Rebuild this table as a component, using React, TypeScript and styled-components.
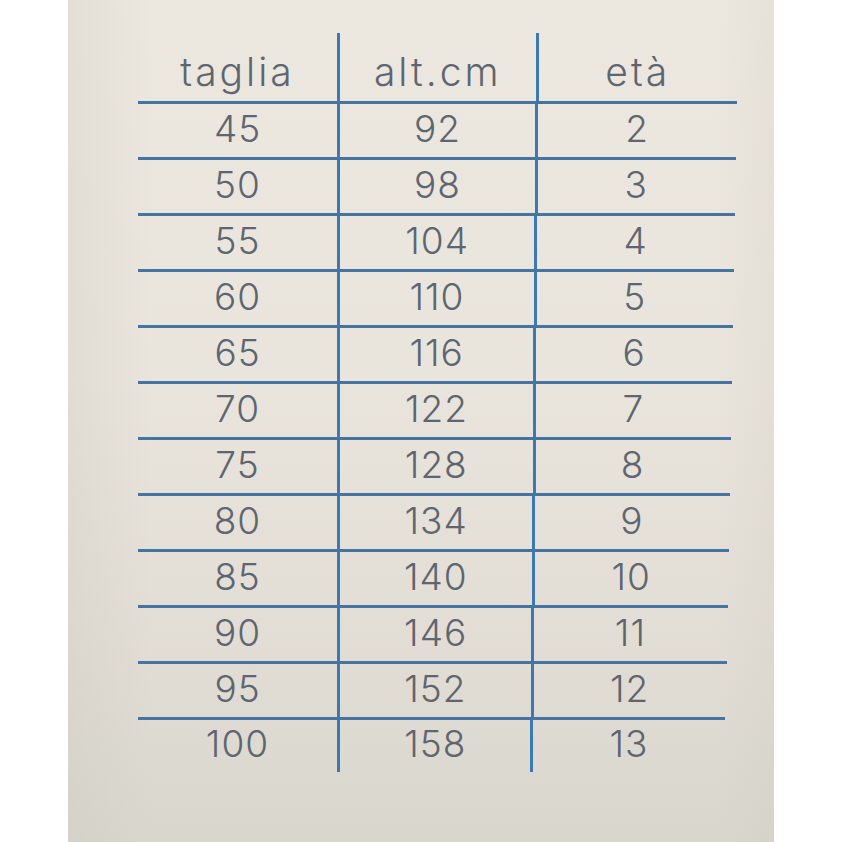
import React from "react";
import styled, { createGlobalStyle } from "styled-components";

const Global = createGlobalStyle`
  html, body {
    margin: 0;
    padding: 0;
    background: #ffffff;
  }
  #root {
    width: 842px;
    height: 842px;
  }
`;

const Page = styled.div`
  width: 842px;
  height: 842px;
  display: flex;
  background: #ffffff;
`;

const Card = styled.main`
  margin-left: 68px;
  width: 706px;
  height: 842px;
  box-sizing: border-box;
  padding: 33px 0 0 70px;
  background:
    linear-gradient(to right, rgba(200, 196, 186, 0.25) 0%, rgba(200, 196, 186, 0) 12%, rgba(200, 196, 186, 0) 92%, rgba(200, 196, 186, 0.18) 100%),
    linear-gradient(to bottom, #ede8df 0%, #e9e5dc 45%, #e2ded5 75%, #d9d6cd 100%);
`;

const Table = styled.div`
  display: flex;
  flex-direction: column;
  font-family: "Inter", "Liberation Sans", sans-serif;
  color: #5d6670;
`;

const Row = styled.div<{ $step: number; $kind: "header" | "body" | "last" }>`
  display: grid;
  grid-template-columns: 199px ${(p) => 198.5 - p.$step * 0.42}px 1fr;
  width: ${(p) => 599 - p.$step * 1.05}px;
  height: ${(p) => (p.$kind === "header" ? 71 : p.$kind === "last" ? 52 : 56)}px;
  box-sizing: border-box;
  border-bottom: ${(p) => (p.$kind === "last" ? "none" : "3px solid #4574a3")};
`;

const Cell = styled.div<{ $divider?: boolean; $header?: boolean }>`
  display: flex;
  justify-content: center;
  align-items: ${(p) => (p.$header ? "flex-end" : "center")};
  box-sizing: border-box;
  border-left: ${(p) => (p.$divider ? "3px solid #3b78b8" : "none")};
  padding-bottom: ${(p) => (p.$header ? 10 : 5)}px;
  font-size: ${(p) => (p.$header ? 39 : 37)}px;
  font-weight: 300;
  line-height: 1;
  letter-spacing: ${(p) => (p.$header ? 3 : 1)}px;
  white-space: nowrap;
`;

const rows: [string, string, string][] = [
  ["45", "92", "2"],
  ["50", "98", "3"],
  ["55", "104", "4"],
  ["60", "110", "5"],
  ["65", "116", "6"],
  ["70", "122", "7"],
  ["75", "128", "8"],
  ["80", "134", "9"],
  ["85", "140", "10"],
  ["90", "146", "11"],
  ["95", "152", "12"],
  ["100", "158", "13"],
];

export default function App() {
  return (
    <>
      <Global />
      <Page>
        <Card>
          <Table>
            <Row $step={0} $kind="header">
              <Cell $header>taglia</Cell>
              <Cell $header $divider>alt.cm</Cell>
              <Cell $header $divider>età</Cell>
            </Row>
            {rows.map((r, i) => (
              <Row key={r[0]} $step={i + 1} $kind={i === rows.length - 1 ? "last" : "body"}>
                <Cell>{r[0]}</Cell>
                <Cell $divider>{r[1]}</Cell>
                <Cell $divider>{r[2]}</Cell>
              </Row>
            ))}
          </Table>
        </Card>
      </Page>
    </>
  );
}
